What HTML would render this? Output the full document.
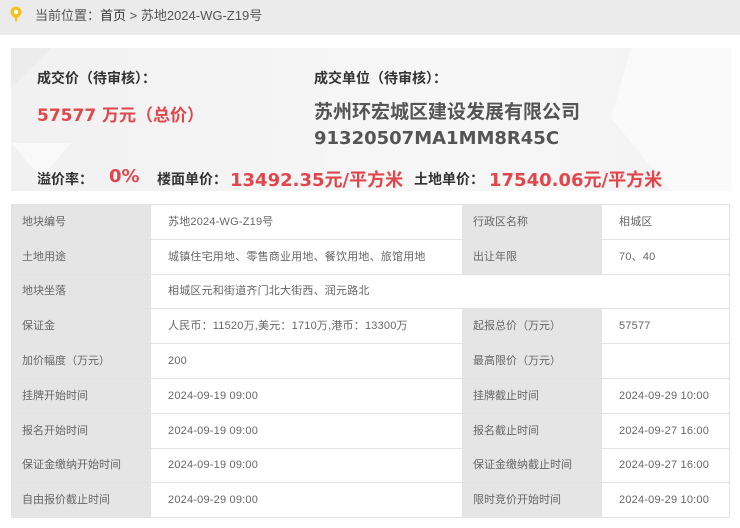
<!DOCTYPE html>
<html><head><meta charset="utf-8"><style>
*{margin:0;padding:0;box-sizing:border-box}
body{width:740px;height:528px;background:#fff;font-family:"Liberation Sans","Noto Sans CJK SC",sans-serif;position:relative;overflow:hidden;color:#333}
.hd{position:absolute;left:0;top:0;width:740px;height:35px;background:#ebebeb;font-size:13px;color:#555;line-height:31px;padding-left:35px}
.hd b{font-weight:normal;color:#333}
.pin{position:absolute;left:10px;top:6px}
.card{position:absolute;left:11px;top:48px;width:720px;height:143px;background:linear-gradient(90deg,#f1f1f1,#f7f7f7 60%,#f3f3f3);overflow:hidden}
.t{position:absolute;font-weight:bold;white-space:nowrap}
.d{font-family:"DejaVu Sans","Noto Sans CJK SC",sans-serif}
.red{color:#e0474c}
table{position:absolute;left:11px;top:204px;width:719px;border-collapse:collapse;font-size:11px;color:#666}
td{height:34.8px;border:1px solid #e3e3e3;padding-left:17px;letter-spacing:0.2px;line-height:14px}
td.l{background:#e5e5e5;color:#666;padding-left:10px;letter-spacing:0}
</style></head><body>
<div class="hd"><svg class="pin" width="12" height="16" viewBox="0 0 12 16"><path d="M6 0.5a5.5 5.5 0 0 1 5.5 5.5c0 3-3.5 5.5-4.5 6.5v3h-2v-3C4 11.5 0.5 9 0.5 6A5.5 5.5 0 0 1 6 0.5z" fill="#f5c21b"/><circle cx="6" cy="6" r="2.2" fill="#fff"/></svg>当前位置：<b>首页</b> &gt; 苏地2024-WG-Z19号</div>
<div class="card">
<svg style="position:absolute;left:0;top:0" width="720" height="143"><polygon points="0,0 40,0 0,40" fill="#ececec"/><polygon points="0,95 60,95 30,130" fill="#f9f9f9"/><polygon points="620,0 720,0 720,143 660,143 600,70" fill="#fafafa"/></svg>
<div class="t" style="left:26px;top:20px;font-size:14px;color:#333">成交价（待审核）：</div>
<div class="t red d" style="left:26px;top:53px;font-size:17px">57577 万元（总价）</div>
<div class="t" style="left:303px;top:20px;font-size:14px;color:#333">成交单位（待审核）：</div>
<div class="t d" style="left:303px;top:51px;font-size:18px;color:#555;line-height:26px"><span style="font-size:19px">苏州环宏城区建设发展有限公司</span><br>91320507MA1MM8R45C</div>
<div class="t" style="left:26px;top:121px;font-size:14px;color:#333">溢价率：</div>
<div class="t red d" style="left:98px;top:118px;font-size:18px">0%</div>
<div class="t" style="left:146px;top:121px;font-size:14px;color:#333">楼面单价：</div>
<div class="t red d" style="left:219px;top:118px;font-size:18px">13492.35元/平方米</div>
<div class="t" style="left:403px;top:121px;font-size:14px;color:#333">土地单价：</div>
<div class="t red d" style="left:478px;top:118px;font-size:18px">17540.06元/平方米</div>
</div>
<table>
<colgroup><col style="width:139px"><col style="width:312px"><col style="width:139px"><col></colgroup>
<tr><td class="l">地块编号</td><td>苏地2024-WG-Z19号</td><td class="l">行政区名称</td><td>相城区</td></tr>
<tr><td class="l">土地用途</td><td>城镇住宅用地、零售商业用地、餐饮用地、旅馆用地</td><td class="l">出让年限</td><td>70、40</td></tr>
<tr><td class="l">地块坐落</td><td colspan="3">相城区元和街道齐门北大街西、润元路北</td></tr>
<tr><td class="l">保证金</td><td>人民币：11520万,美元：1710万,港币：13300万</td><td class="l">起报总价（万元）</td><td>57577</td></tr>
<tr><td class="l">加价幅度（万元）</td><td>200</td><td class="l">最高限价（万元）</td><td></td></tr>
<tr><td class="l">挂牌开始时间</td><td>2024-09-19 09:00</td><td class="l">挂牌截止时间</td><td>2024-09-29 10:00</td></tr>
<tr><td class="l">报名开始时间</td><td>2024-09-19 09:00</td><td class="l">报名截止时间</td><td>2024-09-27 16:00</td></tr>
<tr><td class="l">保证金缴纳开始时间</td><td>2024-09-19 09:00</td><td class="l">保证金缴纳截止时间</td><td>2024-09-27 16:00</td></tr>
<tr><td class="l">自由报价截止时间</td><td>2024-09-29 09:00</td><td class="l">限时竞价开始时间</td><td>2024-09-29 10:00</td></tr>
</table>
</body></html>
